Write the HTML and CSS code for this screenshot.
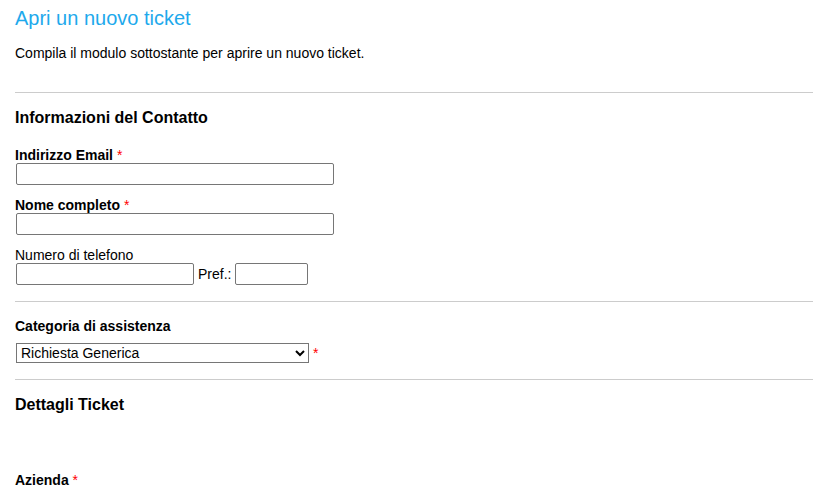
FILE: index.html
```html
<!DOCTYPE html>
<html lang="it">
<head>
    <meta charset="UTF-8">
    <meta name="viewport" content="width=device-width, initial-scale=1.0">
    <title>Apri un nuovo ticket</title>
    <link rel="stylesheet" href="styles.css">
</head>
<body>
    <div class="page">
        <h1>Apri un nuovo ticket</h1>
        <p class="intro">Compila il modulo sottostante per aprire un nuovo ticket.</p>

        <form class="ticket-form" onsubmit="return false;">
            <hr class="divider first">

            <h2 class="section-title">Informazioni del Contatto</h2>

            <label class="field-label bold first-label" for="email">Indirizzo Email <span class="required">*</span></label>
            <input class="text-input wide" type="text" id="email">

            <label class="field-label bold" for="name">Nome completo <span class="required">*</span></label>
            <input class="text-input wide" type="text" id="name">

            <label class="field-label" for="phone">Numero di telefono</label>
            <div class="phone-row">
                <input class="text-input phone" type="text" id="phone">
                <span class="ext-label">Pref.:</span>
                <input class="text-input ext" type="text">
            </div>

            <hr class="divider">

            <label class="field-label bold category-label" for="topic">Categoria di assistenza</label>
            <div class="select-row">
                <select class="topic-select" id="topic">
                    <option>Richiesta Generica</option>
                    <option>Segnalazione Problema</option>
                    <option>Feedback</option>
                </select>
                <span class="required">*</span>
            </div>

            <hr class="divider">

            <h2 class="section-title">Dettagli Ticket</h2>

            <label class="field-label bold company-label" for="company">Azienda <span class="required">*</span></label>
        </form>
    </div>
</body>
</html>
```

FILE: styles.css
```css
* {
    margin: 0;
    padding: 0;
    box-sizing: border-box;
}

body {
    font-family: "Liberation Sans", Arial, sans-serif;
    font-size: 14px;
    line-height: 16px;
    color: #000;
    background: #fff;
}

.page {
    padding: 0 22px 0 15px;
}

h1 {
    font-size: 20px;
    line-height: 24px;
    font-weight: normal;
    color: #1ea9ec;
    margin-top: 6px;
}

.intro {
    margin-top: 15px;
}

.divider {
    border: none;
    height: 1px;
    background: #cccccc;
    margin-top: 16px;
}

.divider.first {
    margin-top: 31px;
}

.section-title {
    font-size: 16px;
    line-height: 19px;
    font-weight: bold;
    margin-top: 15px;
}

.field-label {
    display: block;
    margin-top: 12px;
}

.field-label.bold {
    font-weight: bold;
}

.field-label.first-label {
    margin-top: 20px;
}

.category-label {
    margin-top: 16px !important;
}

.company-label {
    margin-top: 58px;
}

.required {
    color: #ff0000;
    font-weight: normal;
}

.text-input {
    display: block;
    height: 22px;
    margin-left: 1px;
    border: 1px solid #767676;
    border-radius: 2px;
    font-family: inherit;
    font-size: 14px;
    padding: 1px 2px;
    background: #fff;
}

.text-input.wide {
    width: 318px;
}

.phone-row {
    display: flex;
    align-items: center;
}

.text-input.phone {
    width: 178px;
}

.ext-label {
    margin: 0 3px 0 4px;
}

.text-input.ext {
    width: 73px;
}

.select-row {
    display: flex;
    align-items: flex-start;
    margin-top: 9px;
}

.topic-select {
    width: 293px;
    height: 20px;
    margin-left: 1px;
    font-family: inherit;
    font-size: 14px;
    color: #000;
    border: 1px solid #767676;
    background: #fff;
}

.select-row .required {
    margin: 3px 0 0 4px;
    line-height: 14px;
}
```
